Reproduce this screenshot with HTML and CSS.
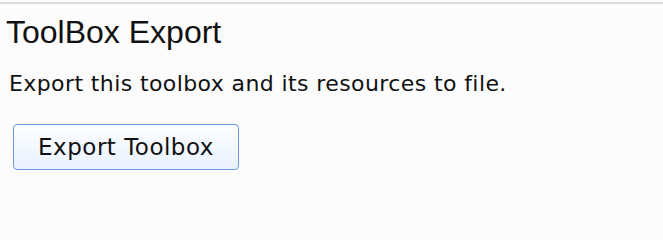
FILE: index.html
```html
<!DOCTYPE html>
<html>
<head>
<meta charset="utf-8">
<link rel="stylesheet" href="styles.css">
</head>
<body>
<div class="topbar"></div>
<main class="panel">
  <h1 class="title">ToolBox Export</h1>
  <p class="desc">Export this toolbox and its resources to file.</p>
  <button class="btn">Export Toolbox</button>
</main>
</body>
</html>
```
FILE: styles.css
```css
html, body {
  margin: 0;
  padding: 0;
  background: #fcfcfc;
  height: 100%;
}
.topbar {
  margin-top: 2px;
  height: 2px;
  background: #dcdcdc;
}
.panel {
  display: flex;
  flex-direction: column;
  align-items: flex-start;
}
.title {
  margin: 12px 0 0 6px;
  font-family: "Liberation Sans", Arial, sans-serif;
  font-weight: normal;
  font-size: 32px;
  line-height: 32px;
  color: #111;
}
.desc {
  margin: 23px 0 0 9px;
  font-family: "DejaVu Sans", sans-serif;
  font-size: 22px;
  line-height: 26px;
  letter-spacing: 0.4px;
  color: #111;
}
.btn {
  margin: 27px 0 0 13px;
  width: 226px;
  height: 46px;
  padding: 0;
  border: 1px solid #6d99e2;
  border-radius: 4px;
  background: linear-gradient(to bottom, #fdfeff, #e9f2ff);
  font-family: "DejaVu Sans", sans-serif;
  font-size: 23px;
  letter-spacing: 0.5px;
  color: #111;
}
```
